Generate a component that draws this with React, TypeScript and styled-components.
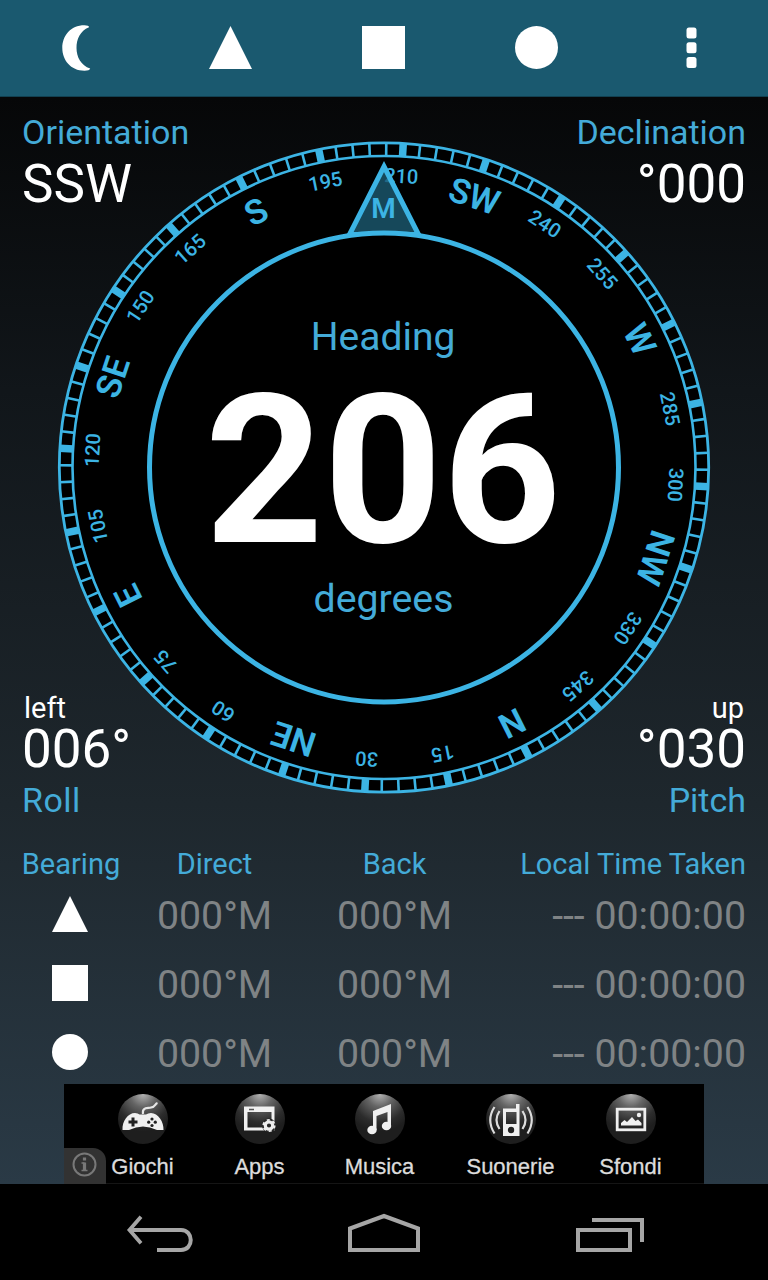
import React from "react";
import styled, { createGlobalStyle } from "styled-components";

const CYAN = "#3cb4e4";
const LABEL = "#44abd8";

const GlobalStyle = createGlobalStyle`
  * { box-sizing: border-box; }
  html, body { margin: 0; padding: 0; background: #000; }
  body { font-family: Roboto, "Liberation Sans", sans-serif; }
  svg { display: block; }
`;

const Screen = styled.div`
  width: 768px;
  height: 1280px;
  display: flex;
  flex-direction: column;
  overflow: hidden;
  background: #000;
`;

const ActionBar = styled.header`
  height: 97px;
  flex: none;
  display: grid;
  grid-template-columns: repeat(5, 1fr);
  justify-items: center;
  align-items: center;
  padding: 0 1px 1px 0;
  background: #1a596f;
  border-bottom: 1px solid #124050;
`;

const Content = styled.main`
  flex: 1;
  display: flex;
  flex-direction: column;
  background: linear-gradient(#060708 0%, #11161a 27%, #1e272d 65%, #2a3a46 100%);
`;

const Stage = styled.section`
  height: 724px;
  flex: none;
  display: grid;
  padding: 0 22px;
`;

const Dial = styled.svg`
  grid-area: 1 / 1;
  justify-self: center;
  margin-top: 42px;
  overflow: visible;
`;

const Readout = styled.div<{ $side: "left" | "right"; $edge: "top" | "bottom" }>`
  grid-area: 1 / 1;
  justify-self: ${(p) => (p.$side === "left" ? "start" : "end")};
  align-self: ${(p) => (p.$edge === "top" ? "start" : "end")};
  text-align: ${(p) => p.$side};
  padding-top: ${(p) => (p.$edge === "top" ? "15px" : "0")};
`;

const ReadoutLabel = styled.div<{ $track?: number }>`
  font-size: 34px;
  line-height: 41px;
  letter-spacing: ${(p) => p.$track ?? 0}px;
  color: ${LABEL};
`;

const ReadoutValue = styled.div<{ $height: number }>`
  font-size: 53px;
  line-height: ${(p) => p.$height}px;
  color: #fff;
`;

const ReadoutNote = styled.div`
  font-size: 29px;
  line-height: 20px;
  padding: 0 2px;
  color: #fff;
`;

const DialText = styled.text<{ $size: number; $weight?: number }>`
  font-family: Roboto, sans-serif;
  font-size: ${(p) => p.$size}px;
  font-weight: ${(p) => p.$weight ?? 400};
  text-anchor: middle;
`;

const BearingTable = styled.section`
  display: flex;
  flex-direction: column;
  gap: 9px;
`;

const Row = styled.div`
  display: grid;
  grid-template-columns: 96px 193px 167px 1fr;
  padding: 0 22px;
  text-align: center;
  align-items: start;
  height: 60px;
  line-height: 62px;
  font-size: 39.3px;
  color: #7f8385;
`;

const Cell = styled.div<{ $end?: boolean }>`
  display: flex;
  white-space: pre;
  justify-content: ${(p) => (p.$end ? "flex-end" : "center")};
`;

const MarkCell = styled(Cell)`
  padding-top: 11px;
`;

const HeadRow = styled(Row)`
  height: 55px;
  padding-top: 26px;
  line-height: 34px;
  font-size: 29px;
  color: ${LABEL};

  ${Cell}:first-child {
    padding-left: 2px;
  }
`;

const Banner = styled.aside`
  position: relative;
  width: 640px;
  height: 100px;
  margin: auto auto 0;
  padding-left: 20px;
  display: grid;
  grid-template-columns: 117px 117px 123px 139px 101px;
  background: #000;
  border-bottom: 1px solid #151515;
`;

const BannerItem = styled.div`
  display: flex;
  flex-direction: column;
  align-items: center;
  padding-top: 10px;
  font-family: "Liberation Sans", Arial, sans-serif;
  font-size: 22px;
  line-height: 25px;
  color: #dcdcdc;
  -webkit-text-stroke: 0.3px #dcdcdc;
  gap: 10px;
`;

const InfoTab = styled.div`
  position: absolute;
  left: 0;
  bottom: -1px;
  width: 42px;
  height: 36px;
  padding: 4px 0 0 8px;
  border-top-right-radius: 13px;
  background: #323232;
`;

const NavBar = styled.nav`
  height: 96px;
  flex: none;
  display: flex;
  justify-content: space-between;
  padding: 28px 124px 0;
  background: #000;
`;

function Mark({ kind, size }: { kind: string; size: number }) {
  return (
    <svg width={size} height={size} viewBox="0 0 44 44" fill="#fff">
      {kind === "triangle" && <path d="M22 0L44 44H0z" />}
      {kind === "square" && <rect width="44" height="44" />}
      {kind === "circle" && <circle cx="22" cy="22" r="22" />}
    </svg>
  );
}

const HEADING = 206.6;
const POINTS: Record<number, string> = {
  0: "N", 45: "NE", 90: "E", 135: "SE", 180: "S", 225: "SW", 270: "W", 315: "NW",
};

function Compass() {
  const ticks = Array.from({ length: 120 }, (_, i) => i * 3);
  return (
    <Dial width="656" height="657" viewBox="-328 -328.5 656 657">
      <circle r="325" fill="#000" />
      <g transform={`rotate(${-HEADING})`} fill={CYAN}>
        {ticks.map((d) => (
          <line
            key={d}
            y1="-325"
            y2="-311"
            stroke={CYAN}
            strokeWidth={d % 15 === 0 ? 7.5 : 2.6}
            transform={`rotate(${d})`}
          />
        ))}
        {ticks.filter((d) => d % 15 === 0).map((d) => (
          <g key={d} transform={`rotate(${d})`}>
            {POINTS[d] ? (
              <DialText $size={34.5} $weight={600} y="-274">{POINTS[d]}</DialText>
            ) : (
              <DialText $size={20} $weight={500} y="-285">{d}</DialText>
            )}
          </g>
        ))}
      </g>
      <circle r="324.700" fill="none" stroke={CYAN} strokeWidth="2.8" />
      <circle r="311.5" fill="none" stroke={CYAN} strokeWidth="2.6" />
      <path
        d="M0 -301L34.5 -233H-34.5z"
        fill="#1b5a71"
        fillOpacity="0.8"
        stroke={CYAN}
        strokeWidth="5"
        strokeMiterlimit="10"
      />
      <DialText $size={28} $weight={600} x="-0.5" y="-249.5" fill={CYAN}>M</DialText>
      <circle r="234.5" fill="#000" stroke={CYAN} strokeWidth="5" />
      <DialText $size={39} x="-1" y="-118" fill={LABEL}>Heading</DialText>
      <DialText $size={207} $weight={700} x="-1" y="74" fill="#fff">206</DialText>
      <DialText $size={39.3} x="-0.500" y="144" fill={LABEL}>degrees</DialText>
    </Dial>
  );
}

const bannerItems: { name: string; art: React.ReactNode }[] = [
  {
    name: "Giochi",
    art: (
      <>
        <path fill="none" stroke="#e6e6e6" strokeWidth="2.2" d="M25 20C24 13 29 14.500 33 13.500C38 12.500 36.500 10 39.500 9" />
        <path d="M4.500 36C4 27 10 19 17 19Q20 19 21.500 20.500H28Q30 19 33 19C40 19 46 28 45.500 36H39Q32 32.500 25 32.500Q18 32.500 11 36z" />
        <path stroke="#222" strokeWidth="3" d="M10.500 28H19.500M15 23.500V32.500" />
        <g fill="#222">
          <circle cx="34" cy="25" r="1.600" />
          <circle cx="34" cy="31.500" r="1.600" />
          <circle cx="30.700" cy="28.200" r="1.600" />
          <circle cx="37.300" cy="28.200" r="1.600" />
        </g>
      </>
    ),
  },
  {
    name: "Apps",
    art: (
      <>
        <path fillRule="evenodd" d="M9 12.500H39.500V36.500H9zM12.500 18V33.500H36.500V18z" />
        <path stroke="#555" strokeWidth="1.500" d="M14 15.500H19" />
        <circle cx="34" cy="31.500" r="7" fill="#262626" />
        <circle cx="34" cy="31.500" r="3.700" fill="none" stroke="#eee" strokeWidth="3.200" />
        <circle cx="34" cy="31.500" r="5.700" fill="none" stroke="#eee" strokeWidth="1.800" strokeDasharray="3 2.970" />
      </>
    ),
  },
  {
    name: "Musica",
    art: (
      <>
        <path d="M18 17L36 10V32H32.500V18L21.500 22V36H18z" />
        <ellipse cx="17" cy="36" rx="4.700" ry="4.300" />
        <ellipse cx="31.500" cy="32" rx="4.700" ry="4.300" />
      </>
    ),
  },
  {
    name: "Suonerie",
    art: (
      <>
        <path fillRule="evenodd" d="M17 14.500H30V10H33.500V42H17zM20 18V30H30.500V18z" />
        <circle cx="25" cy="36" r="3.200" fill="#222" />
        <path
          fill="none"
          stroke="#ddd"
          strokeWidth="2.2"
          d="M13.500 17Q7.500 26 13.500 35M8.500 13Q0 26 8.500 39.500M36.500 17Q42.500 26 36.500 35M41.500 13Q50 26 41.500 39.500"
        />
      </>
    ),
  },
  {
    name: "Sfondi",
    art: (
      <>
        <rect x="11.200" y="15.200" width="27.600" height="20.600" fill="none" stroke="#eee" strokeWidth="2.800" />
        <path d="M15 31.500V29L18.500 26L21 28L26 23L29.500 27L32 25.500L35.500 29V31.500z" />
        <circle cx="33" cy="21" r="2.200" />
      </>
    ),
  },
];

function Orb({ children }: { children: React.ReactNode }) {
  return (
    <svg width="50" height="50" viewBox="0 0 50 50" fill="#f0f0f0">
      <defs>
        <radialGradient id="orb" cx="0.5" cy="0" r="0.75">
          <stop offset="0" stopColor="#b4b4b4" />
          <stop offset="0.35" stopColor="#646464" />
          <stop offset="0.75" stopColor="#2c2c2c" />
          <stop offset="1" stopColor="#1e1e1e" />
        </radialGradient>
      </defs>
      <circle cx="25" cy="25" r="25" fill="url(#orb)" />
      {children}
    </svg>
  );
}

export default function App() {
  return (
    <Screen>
      <GlobalStyle />
      <ActionBar>
        <svg width="30" height="46" viewBox="0.500 0 30 46" fill="#fff">
          <path d="M23 0.300C9 0.300 0.800 11 0.800 23C0.800 35 9 45.700 23 45.700Q28 45.700 28.700 43.500C19.500 40.500 15 32 15 23C15 14 18.500 6 27.500 2.200Q27.500 0.300 23 0.300z" />
        </svg>
        <Mark kind="triangle" size={43} />
        <Mark kind="square" size={43} />
        <Mark kind="circle" size={43} />
        <svg width="13" height="42" viewBox="-2 0 13 42" fill="#fff">
          <rect x="0.500" y="0.500" width="10" height="11" rx="2.500" />
          <rect x="0.500" y="15.200" width="10" height="11" rx="2.500" />
          <rect x="0.500" y="30" width="10" height="11" rx="2.500" />
        </svg>
      </ActionBar>

      <Content>
        <Stage>
          <Compass />
          <Readout $side="left" $edge="top">
            <ReadoutLabel>Orientation</ReadoutLabel>
            <ReadoutValue $height={63}>SSW</ReadoutValue>
          </Readout>
          <Readout $side="right" $edge="top">
            <ReadoutLabel>Declination</ReadoutLabel>
            <ReadoutValue $height={63}>°000</ReadoutValue>
          </Readout>
          <Readout $side="left" $edge="bottom">
            <ReadoutNote>left</ReadoutNote>
            <ReadoutValue $height={62}>006°</ReadoutValue>
            <ReadoutLabel $track={0.5}>Roll</ReadoutLabel>
          </Readout>
          <Readout $side="right" $edge="bottom">
            <ReadoutNote>up</ReadoutNote>
            <ReadoutValue $height={62}>°030</ReadoutValue>
            <ReadoutLabel>Pitch</ReadoutLabel>
          </Readout>
        </Stage>

        <BearingTable>
          <HeadRow>
            <Cell>Bearing</Cell>
            <Cell>Direct</Cell>
            <Cell>Back</Cell>
            <Cell $end>Local Time Taken</Cell>
          </HeadRow>
          {["triangle", "square", "circle"].map((kind) => (
            <Row key={kind}>
              <MarkCell><Mark kind={kind} size={36} /></MarkCell>
              <Cell>000°M</Cell>
              <Cell>000°M</Cell>
              <Cell $end>--- 00:00:00</Cell>
            </Row>
          ))}
        </BearingTable>

        <Banner>
          {bannerItems.map((item) => (
            <BannerItem key={item.name}>
              <Orb>{item.art}</Orb>
              {item.name}
            </BannerItem>
          ))}
          <InfoTab>
            <svg width="25" height="25" viewBox="0 0 25 25" fill="none" stroke="#787878" strokeWidth="2">
              <circle cx="12.500" cy="12.500" r="11" />
              <path strokeWidth="3.200" d="M12.500 5.500V8.500" />
              <path strokeWidth="3.200" d="M12.500 10.500V18.500" />
              <path strokeWidth="1.500" d="M9.500 11H12.500M9.500 18.500H15.500" />
            </svg>
          </InfoTab>
        </Banner>
      </Content>

      <NavBar>
        <svg width="72" height="44" viewBox="0 0 72 44" fill="none" stroke="#a6a6a6" strokeWidth="4">
          <path d="M6 18H57C70 18 70 38 57 38H33" />
          <path strokeWidth="3.800" d="M17 4.800L5.500 18L17 31.200" strokeMiterlimit="2" />
        </svg>
        <svg width="72" height="44" viewBox="0 0 72 44" fill="none" stroke="#a6a6a6" strokeWidth="4">
          <path d="M2 38V16.500L36 4L70 16.500V38z" />
        </svg>
        <svg width="72" height="44" viewBox="-2 0 72 44" fill="none" stroke="#a6a6a6" strokeWidth="4">
          <rect x="4" y="18" width="52" height="20" />
          <path d="M18 8H68V30" />
        </svg>
      </NavBar>
    </Screen>
  );
}
